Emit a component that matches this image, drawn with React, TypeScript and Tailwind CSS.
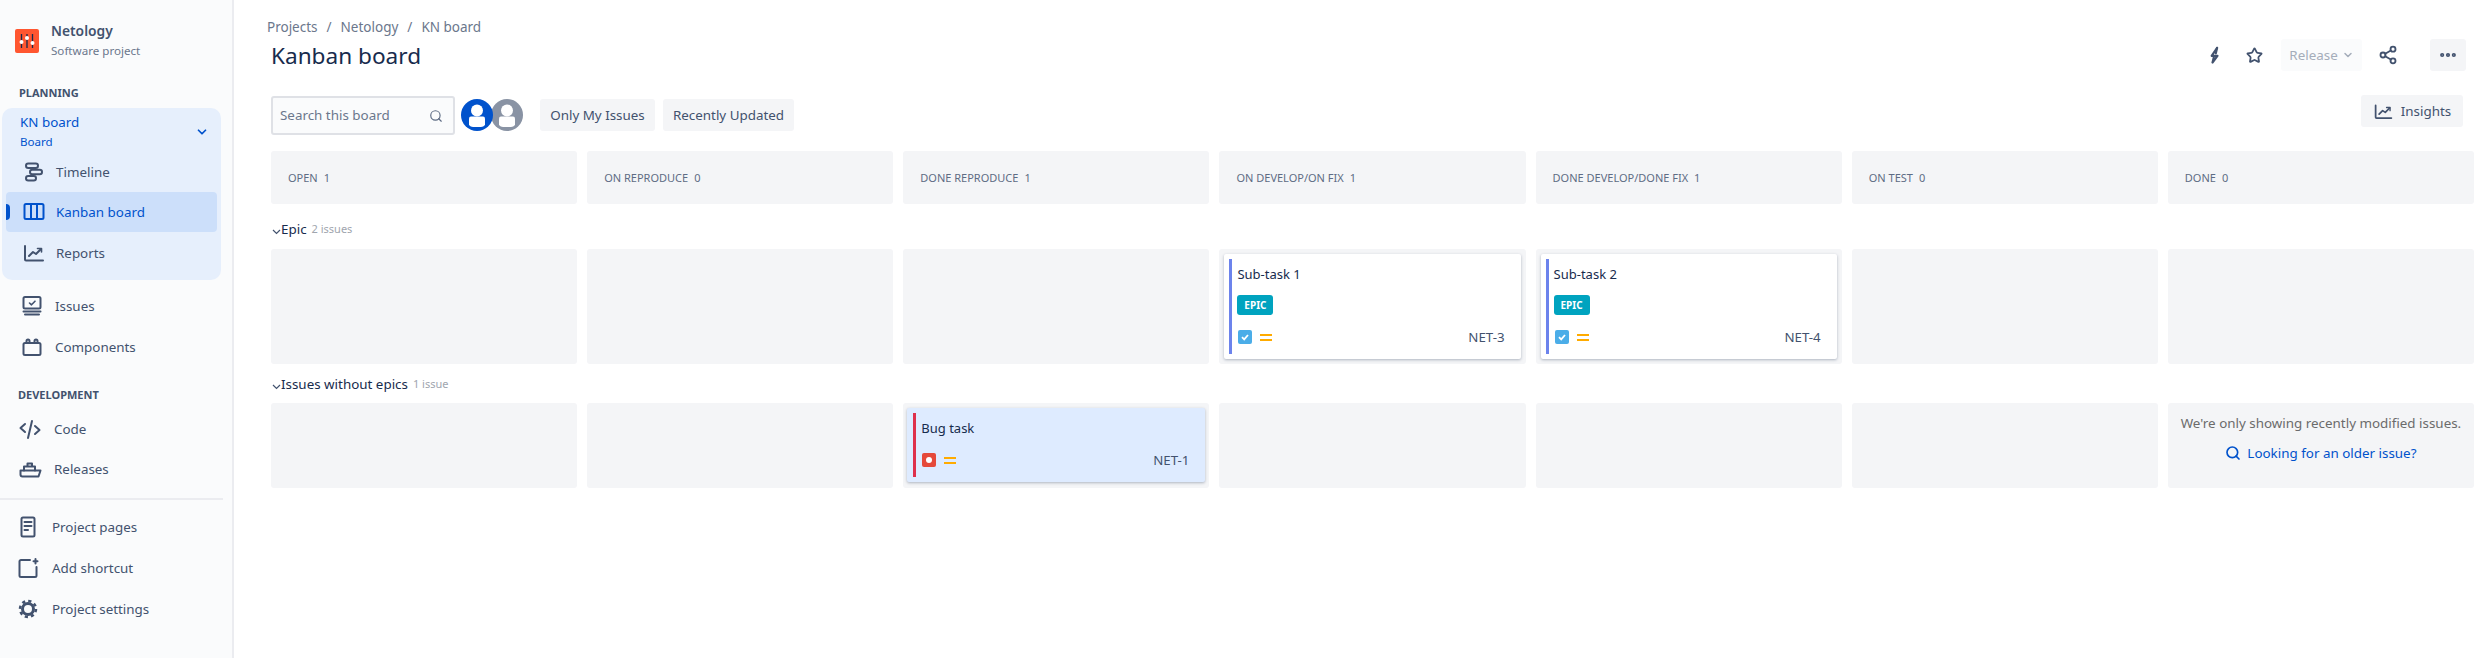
import React from 'react';
import { ChevronDown, Search, Share2, Star, MoreHorizontal } from 'lucide-react';

const navy = '#42526E';

const Glyph: React.FC<{ children: React.ReactNode; size?: number; color?: string }> = ({ children, size = 24, color = navy }) => (
  <svg width={size} height={size} viewBox="0 0 24 24" fill="none" stroke={color} strokeWidth="2" strokeLinecap="round" strokeLinejoin="round" className="shrink-0">
    {children}
  </svg>
);

const TimelineIcon = () => (
  <Glyph>
    <rect x="4" y="3.500" width="12" height="4.500" rx="2.250" />
    <rect x="8" y="9.800" width="12" height="4.500" rx="2.250" />
    <rect x="4" y="16" width="10" height="4.500" rx="2.250" />
  </Glyph>
);

const KanbanIcon = () => (
  <Glyph color="#0052CC">
    <rect x="2.500" y="4" width="19" height="15" rx="1.500" />
    <path d="M9 4v15M15 4v15" strokeLinecap="butt" />
  </Glyph>
);

const ReportsIcon: React.FC<{ size?: number }> = ({ size = 24 }) => (
  <Glyph size={size}>
    <path d="M3 5v13.500a1 1 0 0 0 1 1h17" />
    <path d="M7 15l4-4 3 2 5-5" />
    <path d="M15.500 7.500H19.500V11" strokeWidth="1.600" />
  </Glyph>
);

const IssuesIcon = () => (
  <Glyph>
    <rect x="3.500" y="3" width="17" height="11.500" rx="1.500" />
    <path d="M9.500 9l2 1.800 3.500-3.600" strokeWidth="1.600" />
    <path d="M3.500 17.500h17M5 20.500h14" />
  </Glyph>
);

const ComponentsIcon = () => (
  <Glyph>
    <rect x="3.500" y="8" width="17" height="12" rx="1.500" />
    <path d="M6.500 8V6a1.500 1.500 0 0 1 3 0v2M14.500 8V6a1.500 1.500 0 0 1 3 0v2" />
  </Glyph>
);

const CodeIcon = () => (
  <Glyph>
    <path d="M7 7l-4.500 4 4.500 4M17 9l4.500 4-4.500 4M14 4l-4 17" />
  </Glyph>
);

const ShipIcon = () => (
  <Glyph>
    <path d="M2.500 13.500h20l-2 6h-16a2 2 0 0 1-2-2z" />
    <path d="M6 13.500V9.500h11v4M9.500 9.500V6.500h4.500v3" />
  </Glyph>
);

const PagesIcon = () => (
  <Glyph>
    <rect x="5.500" y="2.500" width="13" height="19" rx="1.500" />
    <path d="M8.500 7h7M8.500 11h7M8.500 15h3.500" />
  </Glyph>
);

const ShortcutIcon = () => (
  <Glyph>
    <path d="M14 4H5a1.500 1.500 0 0 0-1.500 1.500v14A1.500 1.500 0 0 0 5 21h14a1.500 1.500 0 0 0 1.500-1.500V11" />
    <path d="M19.500 3v4.500M17.500 5.200h4" />
  </Glyph>
);

const GearIcon = () => (
  <Glyph>
    <circle cx="12" cy="12" r="5.500" strokeWidth="3" />
    <circle cx="12" cy="12" r="8" strokeWidth="2.500" strokeDasharray="3.200 3.080" strokeLinecap="butt" />
  </Glyph>
);

const BoltIcon = () => (
  <svg width="20" height="20" viewBox="0 0 24 24" fill="none" stroke={navy} strokeWidth="2.600" strokeLinejoin="round" strokeLinecap="round">
    <path d="M14.500 3.500L8 13h7l-6 8 1.500-6" />
    <path d="M14.500 3.500L13 10" />
  </svg>
);

const LogoIcon = () => (
  <div className="w-6 h-6 rounded-[2px] bg-[#FF5630] flex items-center justify-center shrink-0">
    <svg width="20" height="20" viewBox="0 0 20 20" fill="none" stroke="#172B4D">
      <path d="M4.500 3v14M10 3v14M15.500 3v14" strokeWidth="1.300" />
      <circle cx="4.500" cy="11" r="2" fill="#FFFFFF" stroke="none" />
      <circle cx="10" cy="7" r="2" fill="#FFFFFF" stroke="none" />
      <circle cx="15.500" cy="12" r="2" fill="#FFFFFF" stroke="none" />
    </svg>
  </div>
);

const AvatarIcon: React.FC<{ bg: string }> = ({ bg }) => (
  <svg width="32" height="32" viewBox="0 0 32 32" className="shrink-0">
    <circle cx="16" cy="16" r="16" fill={bg} />
    <circle cx="16" cy="11.500" r="6" fill="#FFFFFF" />
    <path d="M8 19.500a2 2 0 0 1 2-2h12a2 2 0 0 1 2 2V26a6 6 0 0 1-4 2h-8a6 6 0 0 1-4-2z" fill="#FFFFFF" />
  </svg>
);

interface NavRowProps {
  icon: React.ReactNode;
  label: string;
  className: string;
}

const NavRow: React.FC<NavRowProps> = ({ icon, label, className }) => (
  <div className={`h-10 flex items-center text-[13.4px] text-[#42526E] ${className}`}>
    {icon}
    <span>{label}</span>
  </div>
);

const Sidebar = () => (
  <aside className="w-[234px] h-[658px] shrink-0 bg-[#FAFBFC] border-r-2 border-[#EBECF0]">
    {/* Project */}
    <div className="pt-[21px] pl-[15px] flex items-center gap-3">
      <LogoIcon />
      <div>
        <div className="text-[13.8px] leading-5 font-semibold text-[#42526E]">Netology</div>
        <div className="text-[11.6px] leading-5 text-[#6B778C]">Software project</div>
      </div>
    </div>

    <div className="mt-6 pl-[19px] h-4 leading-4 text-[11px] font-bold text-[#42526E]">PLANNING</div>

    {/* Board group */}
    <div className="mt-[7px] ml-[2px] w-[219px] h-[172px] rounded-[10px] bg-[#E6EFFC] pt-1">
      <div className="flex items-center justify-between pl-[18px] pr-[12px]">
        <div className="text-[#0052CC]">
          <div className="text-[13.4px] leading-5">KN board</div>
          <div className="text-[11.6px] leading-5">Board</div>
        </div>
        <ChevronDown size={14} strokeWidth={3} color="#0052CC" />
      </div>
      <NavRow icon={<TimelineIcon />} label="Timeline" className="pl-5 gap-[10px]" />
      <div className="relative mx-1 h-10 rounded bg-[#CCDFFA] pl-4 flex items-center gap-[10px] text-[13.4px] text-[#0052CC]">
        <span className="absolute left-0 top-3 w-1 h-4 rounded-r bg-[#0052CC]" />
        <KanbanIcon />
        <span>Kanban board</span>
      </div>
      <NavRow icon={<ReportsIcon />} label="Reports" className="mt-[1px] pl-5 gap-[10px]" />
    </div>

    <NavRow icon={<IssuesIcon />} label="Issues" className="mt-[6px] pl-5 gap-[11px]" />
    <NavRow icon={<ComponentsIcon />} label="Components" className="mt-[1px] pl-5 gap-[11px]" />

    <div className="mt-[20px] pl-[18px] h-4 leading-4 text-[11px] font-bold text-[#42526E]">DEVELOPMENT</div>

    <div className="mt-[6px]">
      <NavRow icon={<CodeIcon />} label="Code" className="pl-[18px] gap-3" />
      <NavRow icon={<ShipIcon />} label="Releases" className="pl-[18px] gap-3" />
    </div>

    <div className="mt-[9px] w-[223px] h-[2px] bg-[#EBECF0]" />

    <div className="mt-[7px] flex flex-col gap-[1px]">
      <NavRow icon={<PagesIcon />} label="Project pages" className="pl-4 gap-3" />
      <NavRow icon={<ShortcutIcon />} label="Add shortcut" className="pl-4 gap-3" />
      <NavRow icon={<GearIcon />} label="Project settings" className="pl-4 gap-3" />
    </div>
  </aside>
);

const columns = [
  { name: 'OPEN', count: 1 },
  { name: 'ON REPRODUCE', count: 0 },
  { name: 'DONE REPRODUCE', count: 1 },
  { name: 'ON DEVELOP/ON FIX', count: 1 },
  { name: 'DONE DEVELOP/DONE FIX', count: 1 },
  { name: 'ON TEST', count: 0 },
  { name: 'DONE', count: 0 },
];

const PriorityIcon = () => (
  <div className="flex flex-col gap-[3px] w-3">
    <span className="h-[2px] bg-[#FFAB00]" />
    <span className="h-[2px] bg-[#FFAB00]" />
  </div>
);

const EpicCard: React.FC<{ title: string; issueKey: string }> = ({ title, issueKey }) => (
  <div className="h-[105px] bg-white rounded-[2px] shadow-[0_1px_3px_rgba(9,30,66,0.3)] py-[5px] pl-[5px] flex">
    <div className="w-[3px] bg-[#6C83EC]" />
    <div className="flex-1 pl-[5px] pr-4">
      <div className="mt-[5px] h-5 leading-5 text-[13px] text-[#172B4D]">{title}</div>
      <div className="mt-[11px] w-9 h-5 rounded-[3px] bg-[#00A3BF] text-white text-[10px] font-bold flex items-center justify-center">EPIC</div>
      <div className="mt-[12px] flex items-center gap-2 pl-[1px]">
        <div className="w-[14px] h-[14px] rounded-[2px] bg-[#4BADE8] flex items-center justify-center">
          <svg width="10" height="10" viewBox="0 0 10 10" fill="none" stroke="#FFFFFF" strokeWidth="1.800">
            <path d="M2 5.200l2.200 2.200L8 3" />
          </svg>
        </div>
        <PriorityIcon />
        <span className="ml-auto text-[13.3px] leading-5 text-[#42526E]">{issueKey}</span>
      </div>
    </div>
  </div>
);

const BugCard = () => (
  <div className="h-[74px] mx-[-1px] bg-[#DEEBFF] rounded-[2px] shadow-[0_1px_3px_rgba(9,30,66,0.3)] py-[5px] pl-[6px] flex">
    <div className="w-[3px] bg-[#DE2F4B]" />
    <div className="flex-1 pl-[5px] pr-4">
      <div className="mt-[5px] h-5 leading-5 text-[13px] text-[#172B4D]">Bug task</div>
      <div className="mt-[12px] flex items-center gap-2 pl-[1px]">
        <div className="w-[14px] h-[14px] rounded-[2px] bg-[#E5493A] flex items-center justify-center">
          <span className="w-[6px] h-[6px] rounded-full bg-white" />
        </div>
        <PriorityIcon />
        <span className="ml-auto text-[13.3px] leading-5 text-[#42526E]">NET-1</span>
      </div>
    </div>
  </div>
);

const Cell: React.FC<{ children?: React.ReactNode }> = ({ children }) => (
  <div className="bg-[#F4F5F7] rounded-[3px] p-[5px]">{children}</div>
);

const SwimlaneTitle: React.FC<{ name: string; note: string }> = ({ name, note }) => (
  <div className="h-5 flex items-center">
    <svg width="9" height="6" viewBox="0 0 9 6" fill="none" stroke={navy} strokeWidth="1.200" className="mt-[5px] ml-[1px] shrink-0">
      <path d="M1 1l3.500 3.500L8 1" />
    </svg>
    <span className="text-[13.4px] text-[#172B4D]">{name}</span>
    <span className="ml-[5px] text-[11px] text-[#A0A5AE]">{note}</span>
  </div>
);

export default function App() {
  return (
    <div className="flex w-[2491px] h-[658px] bg-white overflow-hidden font-['Noto_Sans',sans-serif]">
      <Sidebar />
      <main className="flex-1 pl-[37px] pr-[17px]">
        {/* Page header */}
        <div className="flex justify-between">
          <div>
            <div className="pt-[17px] -ml-[4px] h-[40px] flex gap-[9px] text-[13.5px] leading-5 text-[#6B778C]">
              <span>Projects</span><span>/</span><span>Netology</span><span>/</span><span>KN board</span>
            </div>
            <h1 className="h-8 leading-8 text-[22.6px] text-[#172B4D]">Kanban board</h1>
          </div>
          <div className="pt-[39px] pr-2 flex items-start h-[71px]">
            <div className="h-8 flex items-center"><BoltIcon /></div>
            <div className="ml-[21px] h-8 flex items-center"><Star size={17} strokeWidth={2.5} color={navy} /></div>
            <div className="ml-[18px] w-[81px] h-8 rounded-[3px] bg-[#FAFBFC] flex items-center justify-center gap-1 text-[13.4px] text-[#A5ADBA]">
              Release <ChevronDown size={12} strokeWidth={3} color="#A5ADBA" />
            </div>
            <div className="ml-4 h-8 flex items-center"><Share2 size={20} strokeWidth={2.2} color={navy} /></div>
            <div className="ml-[32px] w-9 h-8 rounded-[3px] bg-[#F4F5F7] flex items-center justify-center">
              <MoreHorizontal size={20} strokeWidth={3} color={navy} />
            </div>
          </div>
        </div>

        {/* Filter bar */}
        <div className="mt-[24px] h-[39px] flex items-start">
          <div className="w-[184px] h-[39px] bg-[#FAFBFC] border-2 border-[#DFE1E6] rounded-[3px] pl-[7px] pr-[10px] flex items-center justify-between text-[13.4px] text-[#6B778C]">
            <span>Search this board</span>
            <Search size={14} strokeWidth={2} color="#5E6C84" />
          </div>
          <div className="mt-[3px] ml-[6px] flex">
            <div className="relative z-10"><AvatarIcon bg="#0052CC" /></div>
            <div className="-ml-[2px]"><AvatarIcon bg="#8993A4" /></div>
          </div>
          <div className="mt-[3px] ml-[17px] w-[115px] h-8 rounded-[3px] bg-[#F4F5F7] flex items-center justify-center text-[13.4px] text-[#42526E]">Only My Issues</div>
          <div className="mt-[3px] ml-2 w-[131px] h-8 rounded-[3px] bg-[#F4F5F7] flex items-center justify-center text-[13.4px] text-[#42526E]">Recently Updated</div>
          <div className="mt-[-1px] ml-auto mr-[11px] w-[102px] h-8 rounded-[3px] bg-[#F4F5F7] flex items-center justify-center gap-[7px] text-[13.4px] text-[#42526E]">
            <ReportsIcon size={21} />
            Insights
          </div>
        </div>

        {/* Column headers */}
        <div className="mt-4 grid grid-cols-7 gap-[10px]">
          {columns.map((c) => (
            <div key={c.name} className="h-[53px] bg-[#F4F5F7] rounded-[3px] pl-[17px] pt-[17px] text-[11px] leading-5 text-[#5E6C84]">
              {c.name}<span className="ml-[6px]">{c.count}</span>
            </div>
          ))}
        </div>

        {/* Epic swimlane */}
        <div className="mt-[15px]"><SwimlaneTitle name="Epic" note="2 issues" /></div>
        <div className="mt-[10px] grid grid-cols-7 gap-[10px]">
          <Cell /><Cell /><Cell />
          <Cell><EpicCard title="Sub-task 1" issueKey="NET-3" /></Cell>
          <Cell><EpicCard title="Sub-task 2" issueKey="NET-4" /></Cell>
          <Cell /><Cell />
        </div>

        {/* Issues without epics swimlane */}
        <div className="mt-[10px]"><SwimlaneTitle name="Issues without epics" note="1 issue" /></div>
        <div className="mt-[9px] grid grid-cols-7 gap-[10px]">
          <Cell /><Cell />
          <Cell><BugCard /></Cell>
          <Cell /><Cell /><Cell />
          <Cell>
            <div className="h-[75px] flex flex-col items-center pt-[5px] text-[13.4px]">
              <span className="leading-5 text-[#6B6B6B]">We're only showing recently modified issues.</span>
              <span className="mt-[10px] leading-5 flex items-center gap-[6px] text-[#0052CC]">
                <Search size={16} strokeWidth={2.5} color="#0052CC" />
                Looking for an older issue?
              </span>
            </div>
          </Cell>
        </div>
      </main>
    </div>
  );
}
